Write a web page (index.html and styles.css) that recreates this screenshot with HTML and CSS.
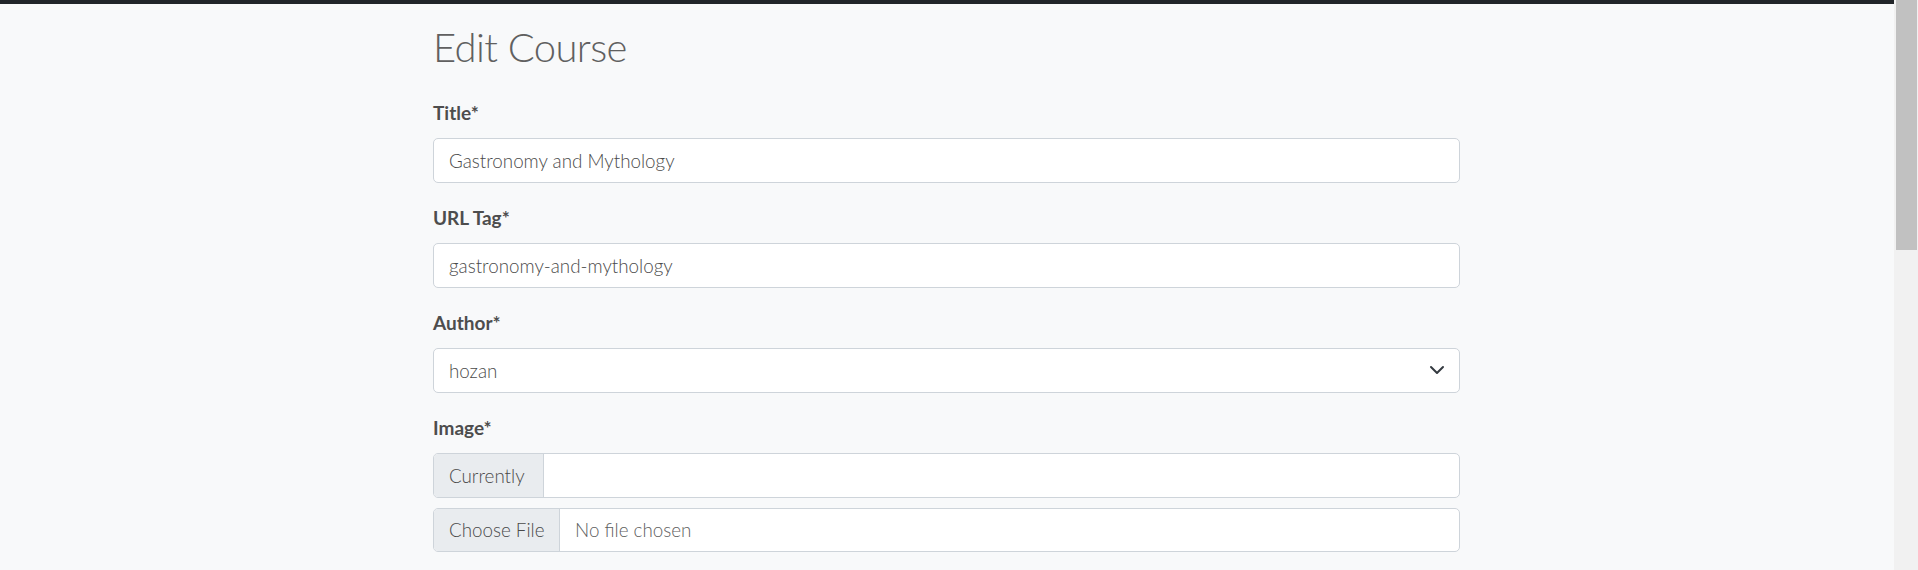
FILE: index.html
```html
<!DOCTYPE html>
<html lang="en">
<head>
<meta charset="utf-8">
<title>Edit Course</title>
<link rel="stylesheet" href="styles.css">
</head>
<body>
<div class="app">
  <div class="main">
    <div class="topbar"></div>
    <div class="container">
      <h1 class="title">Edit Course</h1>
      <form class="form">
        <div class="group">
          <label class="label">Title*</label>
          <div class="control">Gastronomy and Mythology</div>
        </div>
        <div class="group">
          <label class="label">URL Tag*</label>
          <div class="control">gastronomy-and-mythology</div>
        </div>
        <div class="group">
          <label class="label">Author*</label>
          <div class="control select">
            <span class="select-text">hozan</span>
            <svg class="chevron" width="16" height="16" viewBox="0 0 16 16"><path d="m2 5 6 6 6-6" fill="none" stroke="#343a40" stroke-width="2" stroke-linecap="round" stroke-linejoin="round"/></svg>
          </div>
        </div>
        <div class="group last">
          <label class="label">Image*</label>
          <div class="input-group">
            <span class="addon addon-current">Currently</span>
            <span class="addon-fill"></span>
          </div>
          <div class="input-group file">
            <span class="addon addon-file">Choose File</span>
            <span class="file-text">No file chosen</span>
          </div>
        </div>
      </form>
    </div>
  </div>
  <div class="scrollbar"><div class="thumb"></div></div>
</div>
</body>
</html>
```

FILE: styles.css
```css
* { box-sizing: border-box; }
html, body {
  margin: 0;
  padding: 0;
  height: 570px;
  overflow: hidden;
}
body {
  background: #f8f9fa;
  font-family: Lato, "Open Sans", "Liberation Sans", sans-serif;
  color: #555;
}
.app {
  display: flex;
  height: 570px;
}
.main {
  flex: 1;
  min-width: 0;
}
.topbar {
  height: 4px;
  background: #212529;
}
.container {
  width: 1027px;
  margin-left: calc(50% - 514px);
  padding-top: 18.75px;
}
.title {
  margin: 0 0 28.25px 0;
  font-size: 40px;
  font-weight: 300;
  line-height: 48px;
  letter-spacing: -0.6px;
  color: #606060;
}
.group {
  margin-bottom: 21.5px;
}
.group.last { margin-bottom: 0; }
.label {
  display: block;
  font-size: 19px;
  font-weight: 700;
  line-height: 27px;
  color: #4d4d4d;
  margin-bottom: 11.5px;
}
.control {
  height: 45px;
  background: #fff;
  border: 1px solid #ced4da;
  border-radius: 5px;
  padding: 0 15px;
  font-size: 18.8px;
  font-weight: 300;
  line-height: 43px;
  color: #4a4a4a;
}
.select {
  display: flex;
  align-items: center;
  justify-content: space-between;
  padding-right: 14px;
}
.chevron { display: block; margin-top: -1px; }
.input-group {
  display: flex;
  height: 45px;
  background: #fff;
  border: 1px solid #ced4da;
  border-radius: 5px;
  overflow: hidden;
  font-size: 18.8px;
  font-weight: 300;
  line-height: 43px;
}
.input-group.file { margin-top: 10px; height: 44.5px; line-height: 42.5px; }
.addon {
  background: #e9ecef;
  border-right: 1px solid #ced4da;
  padding: 0 15px;
  color: #4a4a4a;
  white-space: nowrap;
}
.addon-current { width: 110px; }
.addon-file { width: 126px; }
.addon-fill { flex: 1; }
.file-text {
  padding-left: 15px;
  color: #606060;
}
.scrollbar {
  width: 24px;
  height: 570px;
  background: #f1f1f1;
  padding: 0 1px 0 2px;
}
.thumb {
  height: 250px;
  background: #c1c1c1;
}
```
